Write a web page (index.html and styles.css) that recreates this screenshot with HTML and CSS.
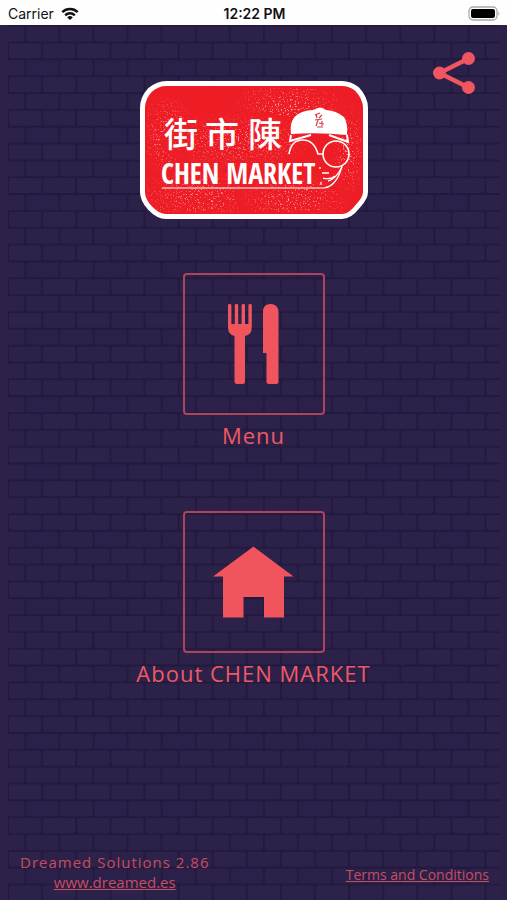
FILE: index.html
```html
<!DOCTYPE html>
<html lang="en">
<head>
  <meta charset="UTF-8" />
  <meta name="viewport" content="width=device-width, initial-scale=1.0"/>
  <title>CHEN MARKET</title>
  <link rel="stylesheet" href="styles.css">
</head>
<body>
  <div class="status-bar">
    <div class="carrier">
      Carrier
      <svg width="18" height="14" viewBox="0 0 18 14" fill="none" stroke="#111" stroke-width="2.4">
        <path d="M1.3 5.2a11 11 0 0 1 15.4 0"/>
        <path d="M4.2 8.3a6.8 6.8 0 0 1 9.6 0"/>
        <path d="M9 13L6.2 10.4a4 4 0 0 1 5.6 0z" fill="#111" stroke="none"/>
      </svg>
    </div>
    <div class="time">12:22 PM</div>
    <svg class="battery" width="33" height="15" viewBox="0 0 33 15">
      <rect x="1" y="1" width="28" height="13" rx="4" fill="#fff" stroke="#a9a9a9" stroke-width="1.3"/>
      <rect x="3" y="3" width="24" height="9" rx="2" fill="#000"/>
      <path d="M30.5 5.2q1.8 2.3 0 4.6z" fill="#999"/>
    </svg>
  </div>

  <div class="screen">
    <svg class="wall" width="100%" height="100%">
      <defs>
        <pattern id="bricks" x="0" y="0.6" width="68.2" height="67.36" patternUnits="userSpaceOnUse">
          <rect width="68.2" height="67.36" fill="#23183d"/>
          <g fill="#2c2148">
            <rect x="-16" y="1" width="32.2" height="15" rx="2"/>
            <rect x="18.1" y="1" width="32.4" height="15" rx="2"/>
            <rect x="52.2" y="1" width="32.4" height="15" rx="2"/>
            <rect x="1" y="17.8" width="32.3" height="15" rx="2" fill="#2d2249"/>
            <rect x="35.1" y="17.8" width="32.3" height="15" rx="2"/>
            <rect x="-16" y="34.7" width="32.4" height="15" rx="2"/>
            <rect x="18.1" y="34.7" width="32.4" height="15" rx="2" fill="#2b204a"/>
            <rect x="52.2" y="34.7" width="32.4" height="15" rx="2"/>
            <rect x="1" y="51.5" width="32.3" height="15" rx="2"/>
            <rect x="35.1" y="51.5" width="32.3" height="15" rx="2" fill="#2d2249"/>
          </g>
        </pattern>
      </defs>
      <rect width="100%" height="100%" fill="url(#bricks)"/>
    </svg>

    <header class="top">
      <svg class="logo" width="228" height="138" viewBox="0 0 228 138" role="img" aria-label="CHEN MARKET">
        <defs>
          <filter id="grain" x="0" y="0" width="100%" height="100%">
            <feTurbulence type="fractalNoise" baseFrequency="0.6" numOctaves="2" seed="8"/>
            <feColorMatrix values="0 0 0 0 1  0 0 0 0 1  0 0 0 0 1  7 0 0 0 -4.1"/>
          </filter>
          <radialGradient id="spot">
            <stop offset="0" stop-color="#aaa"/>
            <stop offset="1" stop-color="#000"/>
          </radialGradient>
          <mask id="worn">
            <ellipse cx="150" cy="28" rx="60" ry="34" fill="url(#spot)"/>
            <ellipse cx="28" cy="55" rx="30" ry="44" fill="url(#spot)"/>
            <ellipse cx="100" cy="60" rx="80" ry="30" fill="url(#spot)"/>
            <ellipse cx="60" cy="116" rx="70" ry="30" fill="url(#spot)"/>
            <ellipse cx="155" cy="118" rx="60" ry="26" fill="url(#spot)"/>
            <ellipse cx="208" cy="70" rx="18" ry="50" fill="url(#spot)"/>
          </mask>
        </defs>
        <path d="M26 2.500H202Q210 2.500 217 8Q225.500 17 225.500 27V111Q225.500 117 218 125Q210 135.500 202 135.500H26Q18 135.500 10 127Q2.500 119 2.500 111V27Q2.500 17 10 9Q18 2.500 26 2.500Z" fill="#ee1c25" stroke="#fff" stroke-width="5"/>
        <g mask="url(#worn)"><rect x="7" y="7" width="214" height="124" filter="url(#grain)"/></g>
        <text class="logo-hanzi" x="24 65 108" y="66">街市陳</text>
        <text class="logo-name" x="21" y="103">CHEN MARKET</text>
        <path d="M22 107H184Q197 105 202 85" fill="none" stroke="#fff" stroke-width="1.200"/>
        <!-- cap and face -->
        <path d="M151 53Q149 37 160 32Q166 29 174 29Q180 24 186 29Q197 30 204 36Q208 42 207 54Q180 51 151 53Z" fill="#fff"/>
        <path d="M151 54L150 60L171 54M189 54L208 61L207 54" fill="none" stroke="#fff" stroke-width="2"/>
        <path d="M149 73Q151 59 163 59Q174 59 178 73H183" fill="none" stroke="#fff" stroke-width="1.600"/>
        <circle cx="196" cy="73" r="13" fill="none" stroke="#fff" stroke-width="1.600"/>
        <path d="M180 86v2M182 92h7M183 97q7 2 12 -2M181 101v3M188 100q8 -2 14 -14" fill="none" stroke="#fff" stroke-width="1.300"/>
        <path d="M175 34l5 -2M176 33l1 4M182 34l-3 3M175 39l7 -1M178 39l-2 6M182 40v5M179 42l5 1M177 46h6" fill="none" stroke="#d83b42" stroke-width="1.200"/>
      </svg>
      <button class="share" type="button" aria-label="Share">
        <svg width="42" height="44" viewBox="0 0 42 44">
          <path d="M35.500 7.500L6.500 22L35.500 36.500" fill="none" stroke="#f0565f" stroke-width="4.500"/>
          <g fill="#f0565f">
            <circle cx="35.500" cy="7.500" r="6.500"/>
            <circle cx="6.500" cy="22" r="6.500"/>
            <circle cx="35.500" cy="36.500" r="6.500"/>
          </g>
        </svg>
      </button>
    </header>

    <nav class="options">
      <a class="option" href="#menu">
        <span class="option-box">
          <svg width="80" height="80" viewBox="0 0 80 80" fill="#f0545c">
            <path d="M14 1.500a1.700 1.700 0 0 1 3.400 0V20h3.400V1.500a1.700 1.700 0 0 1 3.400 0V20h3.400V1.500a1.700 1.700 0 0 1 3.400 0V20H34.400V1.500a1.700 1.700 0 0 1 3.400 0V23Q37.800 31 31 32V77.500Q31 80 28.500 80H23.500Q20.500 80 20.500 77.500V32Q14 31 14 23Z"/>
            <path d="M49 49V8Q49 0 56.500 0T64.500 8V77.500Q64.500 80 62 80H55Q52.500 80 52.500 77.500V49Z"/>
          </svg>
        </span>
        Menu
      </a>
      <a class="option" href="#about">
        <span class="option-box">
          <svg width="80" height="80" viewBox="0 0 80 80" fill="#f0545c">
            <path d="M39.500 4.500L79.500 34.500H70V75.500H50V55H29.500V75.500H9V34.500H-1Z"/>
          </svg>
        </span>
        About CHEN MARKET
      </a>
    </nav>

    <footer class="footer">
      <div class="company">
        <span class="version"><span class="company-name">Dreamed Solutions</span> 2.86</span>
        <a href="#dreamed">www.dreamed.es</a>
      </div>
      <a class="terms" href="#terms">Terms and Conditions</a>
    </footer>
  </div>
</body>
</html>
```
FILE: styles.css
```css
* {
  box-sizing: border-box;
}

body {
  margin: 0;
  min-height: 100vh;
  display: flex;
  flex-direction: column;
  font-family: 'Open Sans', 'Noto Sans', sans-serif;
  background-color: #2c2049;
}

.status-bar {
  display: grid;
  grid-template-columns: 1fr auto 1fr;
  align-items: center;
  height: 25px;
  padding: 2px 6px 0 8px;
  background-color: #fefefe;
  color: #111;
  font-family: Inter, sans-serif;
  font-size: 14px;
}

.carrier {
  display: flex;
  align-items: center;
  gap: 7px;
}

.time {
  font-weight: 600;
}

.battery {
  justify-self: end;
}

.screen {
  position: relative;
  flex: 1;
  display: flex;
  flex-direction: column;
}

/* brick wall behind everything */
.wall {
  position: absolute;
  inset: 0;
  z-index: -1;
  padding: 0 7px 0 8px;
}

.top {
  display: grid;
  grid-template-columns: 1fr auto 1fr;
  align-items: start;
  padding: 26px 32px 0;
}

.logo {
  grid-column: 2;
  margin-top: 30px;
}

.logo-hanzi {
  font-family: 'Noto Sans CJK TC', sans-serif;
  font-size: 34px;
  font-weight: 500;
  fill: #fff;
}

.logo-name {
  font-family: 'Open Sans Condensed', 'Liberation Sans Narrow', sans-serif;
  font-size: 28px;
  font-weight: 700;
  fill: #fff;
}

.share {
  justify-self: end;
  padding: 0;
  border: none;
  background: none;
  cursor: pointer;
}

.options {
  display: grid;
  gap: 62px;
  margin-top: 54px;
}

.option {
  display: flex;
  flex-direction: column;
  align-items: center;
  gap: 6px;
  color: #ee5a64;
  font-size: 22px;
  font-weight: 500;
  line-height: 28px;
  letter-spacing: 1px;
  text-decoration: none;
}

.option-box {
  display: flex;
  align-items: center;
  justify-content: center;
  width: 142px;
  height: 142px;
  border: 2px solid #ad4459;
  border-radius: 4px;
}

.option-box svg {
  overflow: visible;
}

.footer {
  display: flex;
  justify-content: space-between;
  align-items: flex-end;
  margin-top: auto;
  padding: 0 18px 8px 20px;
  color: #c64e62;
  font-size: 14px;
  line-height: 20px;
}

.footer a {
  color: #c64e62;
}

.company {
  display: flex;
  flex-direction: column;
  align-items: center;
  font-size: 15px;
}

.version {
  letter-spacing: 1px;
}

.company-name {
  font-weight: 500;
}

.terms {
  padding-bottom: 7px;
}
```
